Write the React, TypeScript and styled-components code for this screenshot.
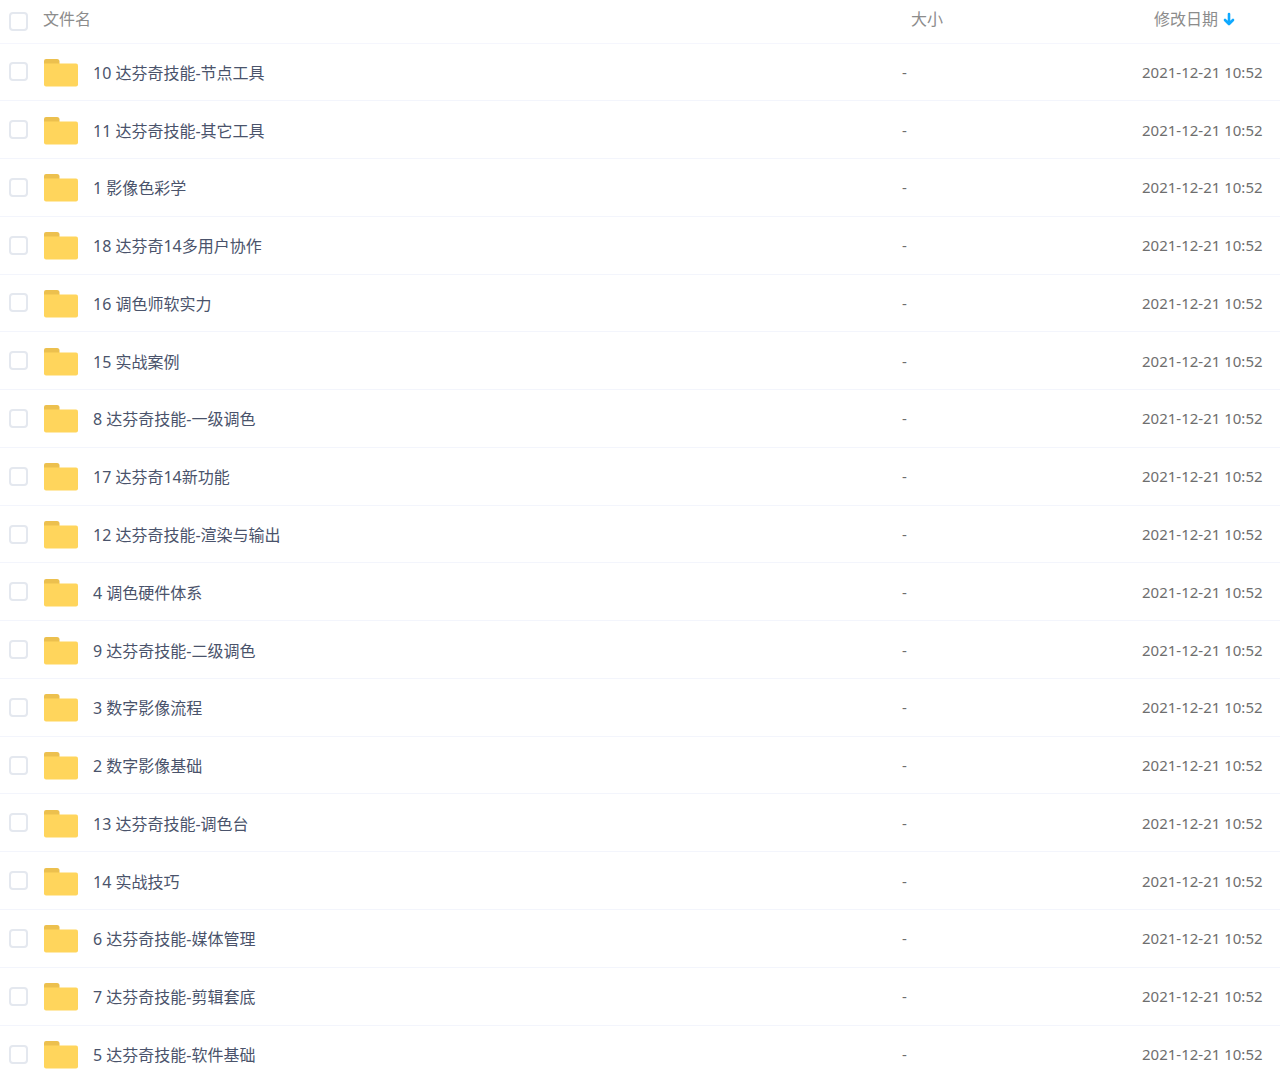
import React, { useState } from "react";
import styled, { createGlobalStyle } from "styled-components";

const GlobalStyle = createGlobalStyle`
  body {
    margin: 0;
    background: #fff;
    font-family: "Noto Sans", "Noto Sans CJK SC", sans-serif;
    font-size: 16px;
    line-height: 24px;
  }
`;

const FileTable = styled.table`
  width: 100%;
  height: 100vh;
  border-collapse: collapse;
  table-layout: fixed;
`;

const CheckColumn = styled.col`
  width: 43px;
`;

const SizeColumn = styled.col`
  width: 240px;
`;

const DateColumn = styled.col`
  width: 138px;
`;

const HeaderRow = styled.tr`
  height: 43px;
  border-bottom: 1px solid #f5f6fd;
`;

const Row = styled.tr`
  height: 57px;
  border-bottom: 1px solid #f3f5fc;

  &:last-child {
    border-bottom: 0;
  }
`;

const HeaderCell = styled.th<{ $indent?: number }>`
  padding: 0 0 4px ${(p) => p.$indent ?? 0}px;
  text-align: left;
  font-weight: 400;
  color: #8c8c8c;
  white-space: nowrap;
`;

const SortButton = styled.button`
  display: inline-flex;
  align-items: center;
  gap: 5px;
  padding: 0;
  border: 0;
  background: none;
  color: inherit;
  font: inherit;
  cursor: pointer;
`;

const Cell = styled.td<{ $muted?: boolean }>`
  padding: ${(p) => (p.$muted ? 0 : 2)}px 0 0;
  font-size: ${(p) => (p.$muted ? 15 : 16)}px;
  color: ${(p) => (p.$muted ? "#6e6e6e" : "#4a536b")};
  white-space: nowrap;
`;

const CheckCell = styled.td`
  padding: 0 0 0 9px;
`;

const Checkbox = styled.input`
  appearance: none;
  display: block;
  box-sizing: border-box;
  width: 19px;
  height: 19px;
  margin: 0;
  border: 2px solid #e4e8ef;
  border-radius: 4px;
  background: #fff;

  &:checked {
    border-color: #06a7ff;
    background: #06a7ff;
  }
`;

const FileName = styled.label`
  display: flex;
  align-items: center;
  gap: 15px;
  padding-left: 1px;
`;

const FolderIcon = () => (
  <svg width="34" height="28" viewBox="0 0 34 28" aria-hidden="true">
    <path d="M0 8V2Q0 0 2 0H13Q15.500 0 15.500 2.500V8Z" fill="#ecc04e" />
    <path d="M0 4.500H32Q34 4.500 34 6.500V25.500Q34 27.500 32 27.500H2Q0 27.500 0 25.500Z" fill="#ffd55c" />
  </svg>
);

const SortArrow = () => (
  <svg width="12" height="14" viewBox="0 0 12 14" fill="none" aria-hidden="true">
    <path
      d="M6 2V11M2 8L6 12L10 8"
      stroke="#0fa9ff"
      strokeWidth="2.600"
      strokeLinecap="round"
      strokeLinejoin="round"
    />
  </svg>
);

const folders = [
  "10 达芬奇技能-节点工具",
  "11 达芬奇技能-其它工具",
  "1 影像色彩学",
  "18 达芬奇14多用户协作",
  "16 调色师软实力",
  "15 实战案例",
  "8 达芬奇技能-一级调色",
  "17 达芬奇14新功能",
  "12 达芬奇技能-渲染与输出",
  "4 调色硬件体系",
  "9 达芬奇技能-二级调色",
  "3 数字影像流程",
  "2 数字影像基础",
  "13 达芬奇技能-调色台",
  "14 实战技巧",
  "6 达芬奇技能-媒体管理",
  "7 达芬奇技能-剪辑套底",
  "5 达芬奇技能-软件基础",
];

export default function App() {
  const [selected, setSelected] = useState<string[]>([]);

  const toggle = (name: string) =>
    setSelected((prev) =>
      prev.includes(name) ? prev.filter((n) => n !== name) : [...prev, name]
    );

  return (
    <>
      <GlobalStyle />
      <FileTable>
        <colgroup>
          <CheckColumn />
          <col />
          <SizeColumn />
          <DateColumn />
        </colgroup>
        <thead>
          <HeaderRow>
            <CheckCell>
              <Checkbox
                id="select-all"
                type="checkbox"
                checked={selected.length === folders.length}
                onChange={(e) => setSelected(e.target.checked ? folders : [])}
              />
            </CheckCell>
            <HeaderCell scope="col">
              <label htmlFor="select-all">文件名</label>
            </HeaderCell>
            <HeaderCell scope="col" $indent={9}>大小</HeaderCell>
            <HeaderCell scope="col" $indent={12}>
              <SortButton type="button">
                修改日期
                <SortArrow />
              </SortButton>
            </HeaderCell>
          </HeaderRow>
        </thead>
        <tbody>
          {folders.map((name, i) => (
            <Row key={name}>
              <CheckCell>
                <Checkbox
                  id={`folder-${i}`}
                  type="checkbox"
                  checked={selected.includes(name)}
                  onChange={() => toggle(name)}
                />
              </CheckCell>
              <Cell>
                <FileName htmlFor={`folder-${i}`}>
                  <FolderIcon />
                  {name}
                </FileName>
              </Cell>
              <Cell $muted>-</Cell>
              <Cell $muted>2021-12-21 10:52</Cell>
            </Row>
          ))}
        </tbody>
      </FileTable>
    </>
  );
}
